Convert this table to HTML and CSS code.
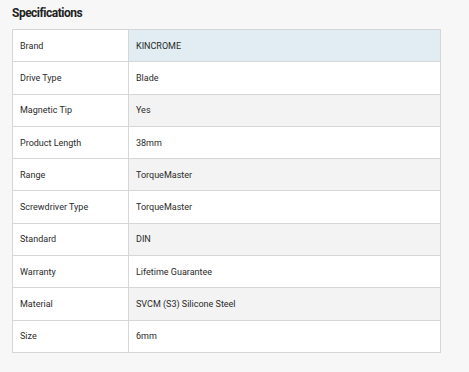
FILE: index.html
```html
<!DOCTYPE html>
<html>
<head>
<meta charset="utf-8">
<link rel="stylesheet" href="styles.css">
</head>
<body>
<div class="page">
  <h2 class="title">Specifications</h2>
  <table class="specs">
    <tr class="hl"><td class="k">Brand</td><td class="v">KINCROME</td></tr>
    <tr><td class="k">Drive Type</td><td class="v">Blade</td></tr>
    <tr class="alt"><td class="k">Magnetic Tip</td><td class="v">Yes</td></tr>
    <tr><td class="k">Product Length</td><td class="v">38mm</td></tr>
    <tr class="alt"><td class="k">Range</td><td class="v">TorqueMaster</td></tr>
    <tr><td class="k">Screwdriver Type</td><td class="v">TorqueMaster</td></tr>
    <tr class="alt"><td class="k">Standard</td><td class="v">DIN</td></tr>
    <tr><td class="k">Warranty</td><td class="v">Lifetime Guarantee</td></tr>
    <tr class="alt"><td class="k">Material</td><td class="v">SVCM (S3) Silicone Steel</td></tr>
    <tr><td class="k">Size</td><td class="v">6mm</td></tr>
  </table>
</div>
</body>
</html>
```
FILE: styles.css
```css
html, body {
  margin: 0;
  padding: 0;
  background: #f7f7f7;
}
.page {
  padding: 6px 0 0 12px;
  font-family: Roboto, "Liberation Sans", sans-serif;
  color: #2a2a2a;
}
.title {
  margin: 0 0 9px 0;
  font-size: 12px;
  line-height: 14px;
  font-weight: 700;
  letter-spacing: -0.5px;
  color: #222;
}
.specs {
  width: 429px;
  border-collapse: collapse;
  border: 1px solid #d2d2d2;
  background: #fff;
  font-size: 9px;
}
.specs tr {
  height: 32.3px;
}
.specs td {
  border: 1px solid #d6d6d6;
  padding: 0 7px;
  vertical-align: middle;
}
.specs .k {
  width: 101px;
  background: #fff;
}
.specs .alt .v {
  background: #f3f3f3;
}
.specs .hl .v {
  background: #e1edf3;
}
```
